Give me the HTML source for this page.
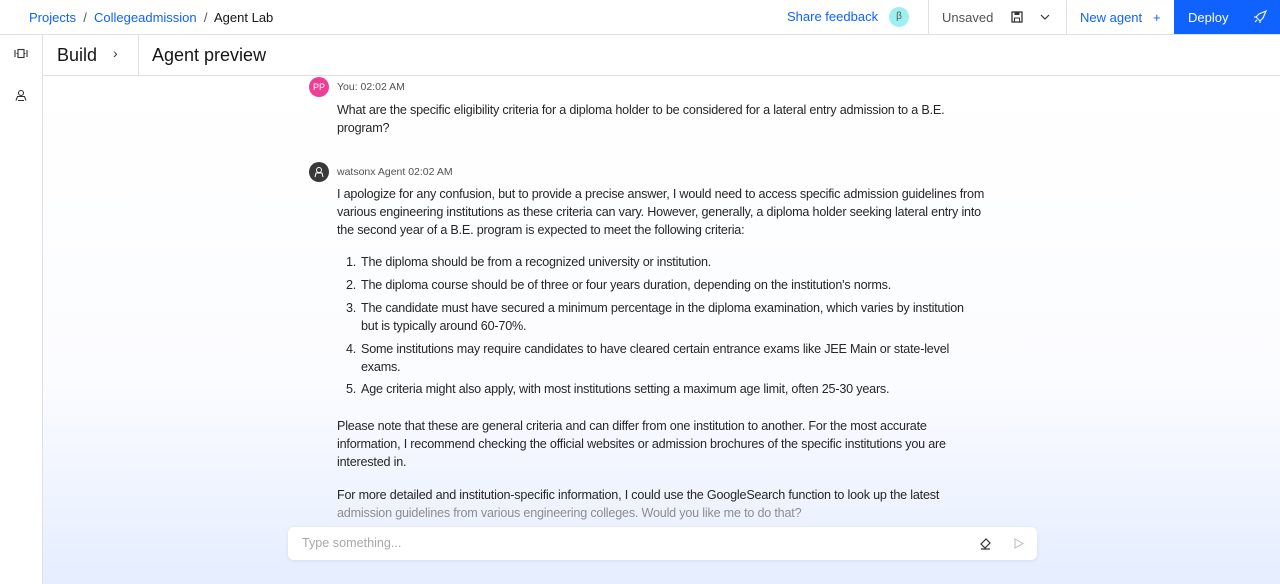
<!DOCTYPE html>
<html><head><style>
*{margin:0;padding:0;box-sizing:border-box}
body{width:1280px;height:584px;overflow:hidden;font-family:"Liberation Sans",sans-serif;background:#fff;position:relative;color:#161616}
.top{position:absolute;top:0;left:0;right:0;height:35px;border-bottom:1px solid #e0e0e0;font-size:13px}
.abs{position:absolute}
.rail{position:absolute;left:0;top:35px;width:43px;bottom:0;border-right:1px solid #e0e0e0;background:#fff}
.sub{position:absolute;left:43px;right:0;top:35px;height:41px;border-bottom:1px solid #e0e0e0;background:#fff}
.main{position:absolute;left:43px;right:0;top:76px;bottom:0;background:linear-gradient(#fff 0%,#fbfcff 60%,#e5edff 100%)}
.t{position:absolute;font-size:12.6px;line-height:18px;color:#262626;letter-spacing:-0.2px}
.av{position:absolute;width:20px;height:20px;border-radius:50%;font-size:9px;color:#fff;text-align:center;line-height:20px}
.meta{position:absolute;font-size:10.5px;color:#525252}
</style></head><body>
<div class="top">
<div class="abs" style="left:29px;top:10px;color:#0f62fe">Projects <span style="color:#525252">&nbsp;/&nbsp;</span> Collegeadmission <span style="color:#525252">&nbsp;/&nbsp;</span> <span style="color:#161616">Agent Lab</span></div>
<div class="abs" style="left:787px;top:9px;color:#0f62fe">Share feedback</div>
<div class="abs" style="left:889px;top:7px;width:20px;height:20px;border-radius:50%;background:#9ef0f0;font-size:10px;text-align:center;line-height:20px;color:#555">β</div>
<div class="abs" style="left:928px;top:0;width:1px;height:34px;background:#e0e0e0"></div>
<div class="abs" style="left:942px;top:10px;color:#525252">Unsaved</div>
<svg class="abs" style="left:1011px;top:11px" width="12" height="12" viewBox="0 0 12 12"><rect x="1" y="1" width="10" height="10" fill="none" stroke="#333" stroke-width="1.3"/><rect x="3.5" y="1" width="5" height="3" fill="#333"/><rect x="3.5" y="7" width="5" height="4" fill="none" stroke="#333"/></svg>
<svg class="abs" style="left:1040px;top:13px" width="10" height="8"><path d="M1 2l4 4 4-4" fill="none" stroke="#333" stroke-width="1.2"/></svg>
<div class="abs" style="left:1066px;top:0;width:1px;height:34px;background:#e0e0e0"></div>
<div class="abs" style="left:1080px;top:10px;color:#0f62fe">New agent &nbsp;&nbsp;+</div>
<div class="abs" style="left:1174px;top:0;width:106px;height:34px;background:#0f62fe;color:#fff"><span class="abs" style="left:14px;top:10px">Deploy</span>
<svg class="abs" style="left:79px;top:10px" width="14" height="14" viewBox="0 0 14 14"><path d="M13 1L6 4 3 7l4 4 3-3 3-7zM3 7L1 7M7 11v2M2 12l2-2" fill="none" stroke="#fff" stroke-width="1.1"/></svg></div>
</div>
<div class="rail">
<svg class="abs" style="left:14px;top:13px" width="14" height="11"><rect x="4" y="1.5" width="6" height="8" fill="none" stroke="#333" stroke-width="1.1"/><path d="M1 2v7M13 2v7M2.5 5.5h1.5M10 5.5h1.5" stroke="#333" stroke-width="1.1"/></svg>
<svg class="abs" style="left:15px;top:54px" width="12" height="12"><circle cx="6" cy="4" r="2.5" fill="none" stroke="#333" stroke-width="1.1"/><path d="M1 11.5l1.5-4h7l1.5 4M3 11.5h6" fill="none" stroke="#333" stroke-width="1.1"/></svg>
</div>
<div class="sub">
<div class="abs" style="left:14px;top:10px;font-size:18px">Build</div>
<div class="abs" style="left:70px;top:10px;font-size:14px;color:#333">›</div>
<div class="abs" style="left:95px;top:0;width:1px;height:40px;background:#e0e0e0"></div>
<div class="abs" style="left:109px;top:10px;font-size:18px">Agent preview</div>
</div>
<div class="main"></div>
<div class="av" style="left:309px;top:77px;background:#ee3e96">PP</div>
<div class="meta" style="left:337px;top:81px">You: 02:02 AM</div>
<div class="t" style="left:337px;top:101px;width:650px">What are the specific eligibility criteria for a diploma holder to be considered for a lateral entry admission to a B.E.<br>program?</div>
<div class="av" style="left:309px;top:162px;background:#393939"><svg width="20" height="20"><circle cx="10" cy="8" r="2.5" fill="none" stroke="#fff"/><path d="M6 15l1-4h6l1 4" fill="none" stroke="#fff"/></svg></div>
<div class="meta" style="left:337px;top:166px">watsonx Agent 02:02 AM</div>
<div class="t" style="left:337px;top:185px">I apologize for any confusion, but to provide a precise answer, I would need to access specific admission guidelines from<br>various engineering institutions as these criteria can vary. However, generally, a diploma holder seeking lateral entry into<br>the second year of a B.E. program is expected to meet the following criteria:</div>
<div class="t" style="left:346px;top:253px">1.</div><div class="t" style="left:361px;top:253px">The diploma should be from a recognized university or institution.</div>
<div class="t" style="left:346px;top:276px">2.</div><div class="t" style="left:361px;top:276px">The diploma course should be of three or four years duration, depending on the institution's norms.</div>
<div class="t" style="left:346px;top:299px">3.</div><div class="t" style="left:361px;top:299px">The candidate must have secured a minimum percentage in the diploma examination, which varies by institution<br>but is typically around 60-70%.</div>
<div class="t" style="left:346px;top:340px">4.</div><div class="t" style="left:361px;top:340px">Some institutions may require candidates to have cleared certain entrance exams like JEE Main or state-level<br>exams.</div>
<div class="t" style="left:346px;top:380px">5.</div><div class="t" style="left:361px;top:380px">Age criteria might also apply, with most institutions setting a maximum age limit, often 25-30 years.</div>
<div class="t" style="left:337px;top:417px">Please note that these are general criteria and can differ from one institution to another. For the most accurate<br>information, I recommend checking the official websites or admission brochures of the specific institutions you are<br>interested in.</div>
<div class="t" style="left:337px;top:486px">For more detailed and institution-specific information, I could use the GoogleSearch function to look up the latest<br><span style="color:#8d8d8d">admission guidelines from various engineering colleges. Would you like me to do that?</span></div>
<div class="abs" style="left:288px;top:527px;width:749px;height:33px;background:#fff;border-radius:6px;box-shadow:0 1px 4px rgba(0,0,0,0.08)">
<div class="abs" style="left:14px;top:9px;font-size:12.6px;color:#a8a8a8">Type something...</div>
<svg class="abs" style="left:690px;top:9px" width="14" height="14"><path d="M3 8l5-5 4 4-5 5zM3 13h9" fill="none" stroke="#333" stroke-width="1.2"/></svg>
<svg class="abs" style="left:726px;top:11px" width="10" height="11"><path d="M1 1l8 4.5-8 4.5z" fill="none" stroke="#bbb"/></svg>
</div>
</body></html>
